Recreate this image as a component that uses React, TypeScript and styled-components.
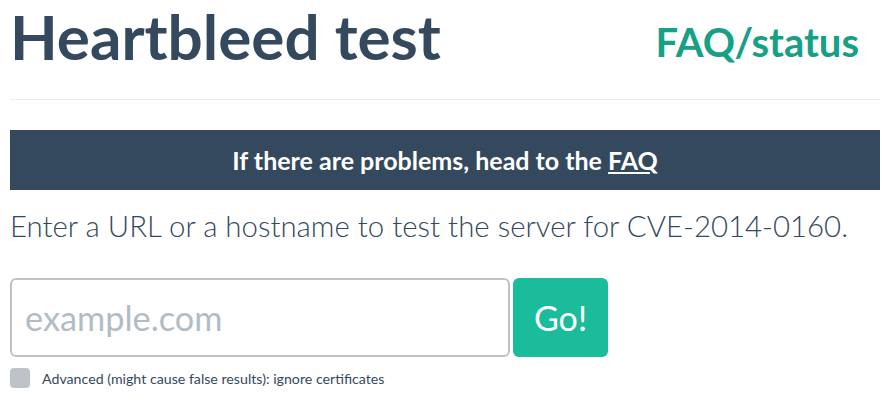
import React from "react";
import styled, { createGlobalStyle } from "styled-components";

const Global = createGlobalStyle`
  html, body { margin: 0; padding: 0; background: #fff; }
  body { font-family: Lato, "Open Sans", sans-serif; color: #34495e; }
  * { box-sizing: border-box; }
`;

const Page = styled.div`
  padding: 0 2px 0 10px;
`;

const Header = styled.header`
  display: flex;
  justify-content: space-between;
  align-items: flex-start;
  height: 100px;
  border-bottom: 1px solid #eeeeee;
`;

const Title = styled.h1`
  margin: 5px 0 0 0;
  font-size: 62px;
  line-height: 62px;
  font-weight: 700;
  color: #34495e;
`;

const StatusLink = styled.a`
  margin: 21.5px 21px 0 0;
  font-size: 40px;
  line-height: 40px;
  font-weight: 700;
  color: #16a085;
  text-decoration: none;
`;

const Banner = styled.div`
  margin-top: 30px;
  height: 60px;
  background: #34495e;
  color: #fff;
  font-weight: 700;
  font-size: 25px;
  line-height: 60px;
  text-align: center;
`;

const BannerLink = styled.a`
  color: #fff;
  text-decoration: underline;
`;

const Lead = styled.p`
  margin: 15px 0 0 0;
  font-size: 29.4px;
  font-weight: 300;
  line-height: 41px;
  color: #34495e;
  white-space: nowrap;
`;

const Form = styled.form`
  display: flex;
  margin-top: 32px;
  height: 79px;
`;

const UrlInput = styled.input`
  width: 500px;
  height: 79px;
  border: 2px solid #bdc3c7;
  border-radius: 6px;
  padding: 0 13px;
  font-family: Lato, sans-serif;
  font-size: 34.3px;
  color: #34495e;
  outline: none;
  &::placeholder { color: #b2bcc5; }
`;

const GoButton = styled.button`
  margin-left: 3px;
  width: 95px;
  height: 79px;
  border: none;
  border-radius: 6px;
  background: #1abc9c;
  color: #fff;
  font-family: Lato, sans-serif;
  font-size: 34px;
  font-weight: 400;
  padding: 0;
`;

const CheckRow = styled.label`
  display: flex;
  align-items: center;
  gap: 12px;
  margin-top: 11px;
  font-size: 14.2px;
  color: #34495e;
  white-space: nowrap;
`;

const CheckBox = styled.span`
  flex: none;
  width: 20px;
  height: 20px;
  border-radius: 4px;
  background: #bdc3c7;
`;

export default function App() {
  return (
    <Page>
      <Global />
      <Header>
        <Title>Heartbleed test</Title>
        <StatusLink href="#">FAQ/status</StatusLink>
      </Header>
      <Banner>
        If there are problems, head to the <BannerLink href="#">FAQ</BannerLink>
      </Banner>
      <Lead>Enter a URL or a hostname to test the server for CVE-2014-0160.</Lead>
      <Form onSubmit={(e) => e.preventDefault()}>
        <UrlInput placeholder="example.com" />
        <GoButton type="submit">Go!</GoButton>
      </Form>
      <CheckRow>
        <CheckBox />
        Advanced (might cause false results): ignore certificates
      </CheckRow>
    </Page>
  );
}
